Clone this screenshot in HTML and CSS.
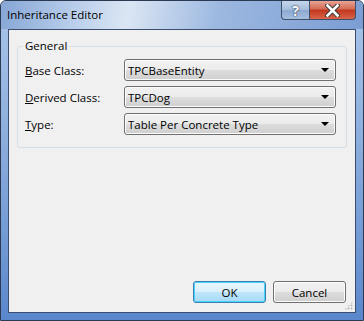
FILE: index.html
```html
<!DOCTYPE html>
<html lang="en">
<head>
	<meta charset="UTF-8">
	<title>Inheritance Editor</title>
	<link rel="stylesheet" href="styles.css">
</head>
<body>
<div class="window">
	<div class="titlebar">
		<span class="title">Inheritance Editor</span>
		<div class="captionButtons">
			<div class="capBtn helpBtn">?</div>
			<div class="capBtn closeBtn">
				<svg width="15" height="13" viewBox="0 0 15 13">
					<path d="M2.5 1.5 L12.5 11.5 M12.5 1.5 L2.5 11.5" stroke="#3b3b3b" stroke-width="4.6" stroke-linecap="square"/>
					<path d="M2.5 1.5 L12.5 11.5 M12.5 1.5 L2.5 11.5" stroke="#fff" stroke-width="2.6" stroke-linecap="square"/>
				</svg>
			</div>
		</div>
	</div>
	<div class="client">
		<div class="groupBox">
			<span class="groupTitle">General</span>
			<div class="row">
				<label><u>B</u>ase Class:</label>
				<div class="combo"><span>TPCBaseEntity</span><i class="arrow"></i></div>
			</div>
			<div class="row">
				<label><u>D</u>erived Class:</label>
				<div class="combo"><span>TPCDog</span><i class="arrow"></i></div>
			</div>
			<div class="row">
				<label><u>T</u>ype:</label>
				<div class="combo"><span>Table Per Concrete Type</span><i class="arrow"></i></div>
			</div>
		</div>
		<div class="footer">
			<button class="btn default">OK</button>
			<button class="btn">Cancel</button>
		</div>
		<div class="grip"></div>
	</div>
</div>
</body>
</html>
```
FILE: styles.css
```css
body {
	margin: 0;
	font-family: "Open Sans", "Noto Sans", sans-serif;
	font-size: 11.5px;
	background: #fff;
}

.window {
	width: 364px;
	height: 321px;
	box-sizing: border-box;
	border: 1px solid #2b3a52;
	border-radius: 6px 6px 0 0;
	background: linear-gradient(to bottom, #a9c4e9 0%, #8fb0de 40%, #6d96d2 80%, #5a86cc 100%);
	display: flex;
	flex-direction: column;
	position: relative;
}

.titlebar {
	height: 28px;
	display: flex;
	align-items: flex-start;
	justify-content: space-between;
	background: linear-gradient(100deg, #86a6d6 0%, #b7cdea 20%, #dbe6f4 35%, #9cb8e0 60%, #7b9dd3 100%);
	border-radius: 6px 6px 0 0;
}

.title {
	margin: 6px 0 0 6px;
	color: #000;
	font-size: 11.5px;
}

.captionButtons {
	display: flex;
	margin-right: 7px;
}

.capBtn {
	height: 19px;
	box-sizing: border-box;
	border: 1px solid #3f4f6a;
	border-top: none;
	display: flex;
	align-items: center;
	justify-content: center;
}

.helpBtn {
	width: 28px;
	border-radius: 0 0 0 4px;
	border-right: none;
	background: linear-gradient(to bottom, #c5d6ec 0%, #a6bddc 50%, #8da8cf 51%, #a5bfe0 100%);
	color: #fff;
	font-weight: bold;
	font-size: 14px;
	text-shadow: 0 0 2px #2a3b55, 0 0 1px #2a3b55;
}

.closeBtn {
	width: 47px;
	border-radius: 0 0 4px 0;
	background: linear-gradient(to bottom, #e8a493 0%, #d46a55 45%, #c2361d 50%, #d9654a 100%);
}

.client {
	flex: 1;
	margin: 0 7px 7px 7px;
	background: #f0f0f0;
	border: 1px solid #3c4e6e;
	display: flex;
	flex-direction: column;
	padding: 16px 8px 9px 8px;
	position: relative;
}

.groupBox {
	border: 1px solid #d5dfe5;
	border-radius: 3px;
	padding: 12px 10px 12px 7px;
	position: relative;
	display: flex;
	flex-direction: column;
	gap: 5px;
}

.groupTitle {
	position: absolute;
	top: -9px;
	left: 5px;
	padding: 0 2px;
	background: #f0f0f0;
	line-height: 16px;
}

.row {
	display: flex;
	align-items: center;
}

.row label {
	width: 99px;
}

.combo {
	flex: 1;
	height: 22px;
	box-sizing: border-box;
	border: 1px solid #707070;
	border-radius: 3px;
	background: linear-gradient(to bottom, #f2f2f2 0%, #ebebeb 50%, #dddddd 51%, #cfcfcf 100%);
	display: flex;
	align-items: center;
	justify-content: space-between;
	padding: 0 6px 0 3px;
	box-shadow: inset 0 0 0 1px #fcfcfc;
}

.arrow {
	width: 0;
	height: 0;
	border-left: 4px solid transparent;
	border-right: 4px solid transparent;
	border-top: 4px solid #000;
}

.footer {
	margin-top: auto;
	display: flex;
	justify-content: flex-end;
	gap: 7px;
	padding-right: 1px;
}

.btn {
	width: 73px;
	height: 22px;
	font-family: inherit;
	font-size: 11.5px;
	color: #000;
	border: 1px solid #707070;
	border-radius: 3px;
	background: linear-gradient(to bottom, #f2f2f2 0%, #ebebeb 50%, #dddddd 51%, #cfcfcf 100%);
	box-shadow: inset 0 0 0 1px #fcfcfc;
	padding: 0;
}

.btn.default {
	border-color: #3c7fb1;
	background: linear-gradient(to bottom, #eaf6fd 0%, #d9f0fc 50%, #bee6fd 51%, #a7d9f5 100%);
	box-shadow: inset 0 0 0 1px #48d5fb;
}

.grip {
	position: absolute;
	right: 2px;
	bottom: 2px;
	width: 9px;
	height: 9px;
	background:
		radial-gradient(circle, #b5b5b5 0.8px, transparent 1.2px) 0 0 / 3px 3px;
	clip-path: polygon(100% 0, 100% 100%, 0 100%);
}
```
